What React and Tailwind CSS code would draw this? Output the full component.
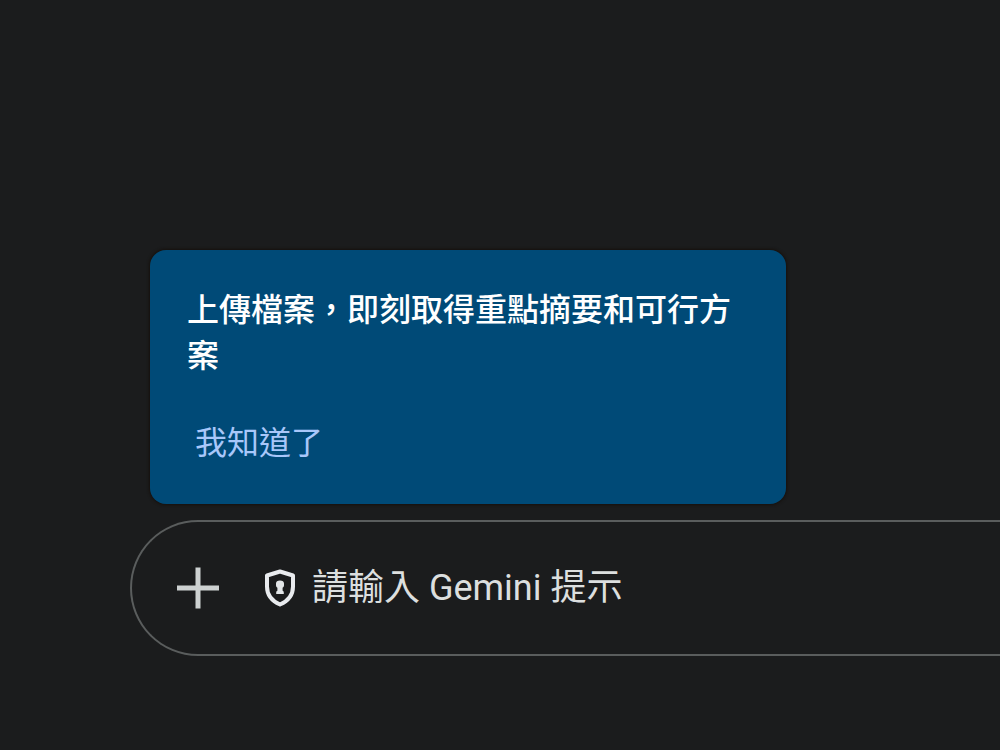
import { useState } from 'react';

function PlusIcon() {
  return (
    <svg viewBox="0 0 44 44" className="h-11 w-11" fill="none" stroke="#cdd1d1" strokeWidth="5" aria-hidden="true">
      <path d="M22 1.5v41M1 22h42" />
    </svg>
  );
}

function ShieldIcon() {
  return (
    <svg viewBox="0 0 32 38" className="h-[38px] w-8 shrink-0" fill="none" aria-hidden="true">
      <path
        d="M16 2.5 29 6.5v11C29 26 24 32 16 35.5 8 32 3 26 3 17.5v-11L16 2.5Z"
        stroke="#e9ebee"
        strokeWidth="4"
        strokeLinejoin="round"
      />
      <path
        d="M12 14.5c0-2 1.4-3 4-3s4 1 4 3v1.8c0 1.2-.5 2-1.4 2.5v3c.9.4 1.2 1 1.2 2v1.2h-7.6v-1.2c0-1 .3-1.6 1.2-2v-3c-.9-.5-1.4-1.3-1.4-2.5v-1.8Z"
        fill="#e3e6e8"
      />
    </svg>
  );
}

function UploadTip({ onClose }) {
  return (
    <div
      role="dialog"
      aria-label="上傳檔案"
      className="ml-5 w-[636px] max-w-full rounded-2xl bg-[#004a77] p-[37px] shadow-[0_0_3px_1px_#16100c]"
    >
      <p className="text-[32px] leading-[46px] font-medium text-white">
        上傳檔案，即刻取得重點摘要和可行方案
      </p>
      <button type="button" onClick={onClose} className="mt-10 block px-2 text-[32px] leading-[48px] text-[#a8c7fa]">
        我知道了
      </button>
    </div>
  );
}

export default function App() {
  const [tipOpen, setTipOpen] = useState(true);

  return (
    <main className="flex min-h-screen flex-col justify-end gap-4 overflow-hidden bg-[#1b1c1d] pb-[94px] pl-[130px] font-[Roboto,'Noto_Sans_CJK_TC',sans-serif]">
      {tipOpen && <UploadTip onClose={() => setTipOpen(false)} />}

      <form
        onSubmit={(e) => e.preventDefault()}
        className="flex h-[136px] items-center gap-4 rounded-l-full border-2 border-r-0 border-[#5a5d5d] pl-11"
      >
        <button type="button" aria-label="新增檔案" className="mr-7 shrink-0">
          <PlusIcon />
        </button>
        <ShieldIcon />
        <input
          type="text"
          aria-label="請輸入 Gemini 提示"
          placeholder="請輸入 Gemini 提示"
          className="h-14 min-w-0 flex-1 bg-transparent text-[36px] text-[#e3e6e8] outline-none placeholder:text-[#dcdfdf]"
        />
      </form>
    </main>
  );
}
